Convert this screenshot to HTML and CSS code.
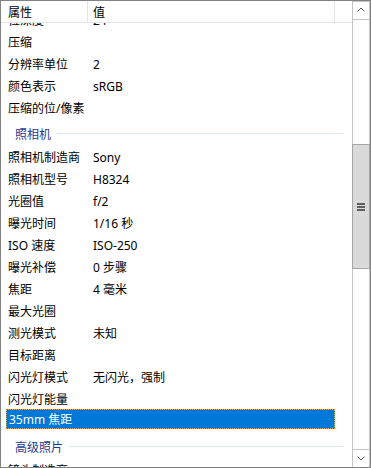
FILE: index.html
```html
<!DOCTYPE html>
<html lang="zh-CN">
<head>
  <meta charset="UTF-8">
  <title>属性 - 详细信息</title>
  <link rel="stylesheet" href="styles.css">
</head>
<body>
  <div class="frame">
    <div class="view">
      <div class="head">
        <div class="hcell hname">属性</div>
        <div class="hcell hvalue">值</div>
        <div class="hcell hrest"></div>
      </div>

      <div class="list">
        <div class="row"><span class="name">位深度</span><span class="value">24</span></div>
        <div class="row"><span class="name">压缩</span><span class="value"></span></div>
        <div class="row"><span class="name">分辨率单位</span><span class="value">2</span></div>
        <div class="row"><span class="name">颜色表示</span><span class="value">sRGB</span></div>
        <div class="row"><span class="name">压缩的位/像素</span><span class="value"></span></div>

        <div class="group"><span>照相机</span></div>
        <div class="row"><span class="name">照相机制造商</span><span class="value">Sony</span></div>
        <div class="row"><span class="name">照相机型号</span><span class="value">H8324</span></div>
        <div class="row"><span class="name">光圈值</span><span class="value">f/2</span></div>
        <div class="row"><span class="name">曝光时间</span><span class="value">1/16 秒</span></div>
        <div class="row"><span class="name">ISO 速度</span><span class="value">ISO-250</span></div>
        <div class="row"><span class="name">曝光补偿</span><span class="value">0 步骤</span></div>
        <div class="row"><span class="name">焦距</span><span class="value">4 毫米</span></div>
        <div class="row"><span class="name">最大光圈</span><span class="value"></span></div>
        <div class="row"><span class="name">测光模式</span><span class="value">未知</span></div>
        <div class="row"><span class="name">目标距离</span><span class="value"></span></div>
        <div class="row"><span class="name">闪光灯模式</span><span class="value">无闪光，强制</span></div>
        <div class="row"><span class="name">闪光灯能量</span><span class="value"></span></div>
        <div class="row selected"><span class="name">35mm 焦距</span><span class="value"></span></div>

        <div class="group"><span>高级照片</span></div>
        <div class="row"><span class="name">镜头制造商</span><span class="value"></span></div>
      </div>
    </div>

    <div class="scrollbar">
      <div class="btn up">
        <svg width="8" height="5" viewBox="0 0 8 5"><polyline points="0.5,4.5 4,1 7.5,4.5" fill="none" stroke="#606060" stroke-width="1"/></svg>
      </div>
      <div class="track">
        <div class="thumb">
          <div class="grip"><i></i><i></i><i></i></div>
        </div>
      </div>
      <div class="btn down">
        <svg width="8" height="5" viewBox="0 0 8 5"><polyline points="0.5,0.5 4,4 7.5,0.5" fill="none" stroke="#606060" stroke-width="1"/></svg>
      </div>
    </div>
  </div>
</body>
</html>
```

FILE: styles.css
```css
body {
  margin: 0;
  font-family: "Noto Sans", "Noto Sans CJK SC", sans-serif;
  font-size: 12px;
  color: #000;
  background: #fff;
}

.frame {
  width: 371px;
  height: 468px;
  box-sizing: border-box;
  border: 1px solid #828282;
  display: flex;
  overflow: hidden;
  background: #fff;
}

.view {
  flex: 1;
  display: flex;
  flex-direction: column;
  overflow: hidden;
}

/* 表头 */
.head {
  display: flex;
  height: 22px;
  box-sizing: border-box;
  border-bottom: 1px solid #e5e5e5;
  position: relative;
  z-index: 1;
  background: #fff;
}

.hcell {
  padding-top: 2px;
  line-height: 19px;
  box-sizing: border-box;
  border-right: 1px solid #e5e5e5;
  white-space: nowrap;
}

.hname {
  width: 87px;
  padding-left: 7px;
}

.hvalue {
  width: 247px;
  padding-left: 5px;
}

.hrest {
  flex: 1;
  border-right: none;
}

/* 列表 */
.list {
  margin-top: -15px;
}

.row {
  display: flex;
  height: 22px;
  box-sizing: border-box;
  padding-top: 2px;
  line-height: 22px;
  white-space: nowrap;
}

.row .name {
  width: 86px;
  padding-left: 7px;
  box-sizing: border-box;
}

.row .value {
  padding-left: 6px;
}

.row.selected {
  height: 20px;
  padding-top: 1px;
  line-height: 20px;
  margin: 0 17px 2px 5px;
  background: #0078d7;
  color: #fff;
  outline: 1px dotted #f3a53a;
  outline-offset: -1px;
}

.row.selected .name {
  width: 81px;
  padding-left: 3px;
}

.group {
  display: flex;
  align-items: center;
  height: 27px;
  padding: 4px 9px 0 14px;
  box-sizing: border-box;
  color: #1e3a8f;
  white-space: nowrap;
}

.group::after {
  content: "";
  flex: 1;
  margin-left: 6px;
  border-top: 1px solid #dde8f5;
}

/* 滚动条 */
.scrollbar {
  width: 18px;
  box-sizing: border-box;
  border-left: 1px solid #c3c3c3;
  border-right: 1px solid #c3c3c3;
  display: flex;
  flex-direction: column;
}

.btn {
  height: 19px;
  box-sizing: border-box;
  display: flex;
  align-items: center;
  justify-content: center;
}

.btn.up {
  border-top: 1px solid #c3c3c3;
  border-bottom: 1px solid #c3c3c3;
  padding-bottom: 2px;
}

.btn.down {
  height: 18px;
  border-top: 1px solid #c3c3c3;
}

.track {
  flex: 1;
}

.thumb {
  margin: 124px -1px 0 -1px;
  height: 125px;
  box-sizing: border-box;
  background: #dadada;
  border: 1px solid #a6a6a6;
  display: flex;
  align-items: center;
  justify-content: center;
}

.grip {
  display: flex;
  flex-direction: column;
  gap: 1px;
}

.grip i {
  display: block;
  width: 8px;
  height: 2px;
  background: #606060;
}
```
